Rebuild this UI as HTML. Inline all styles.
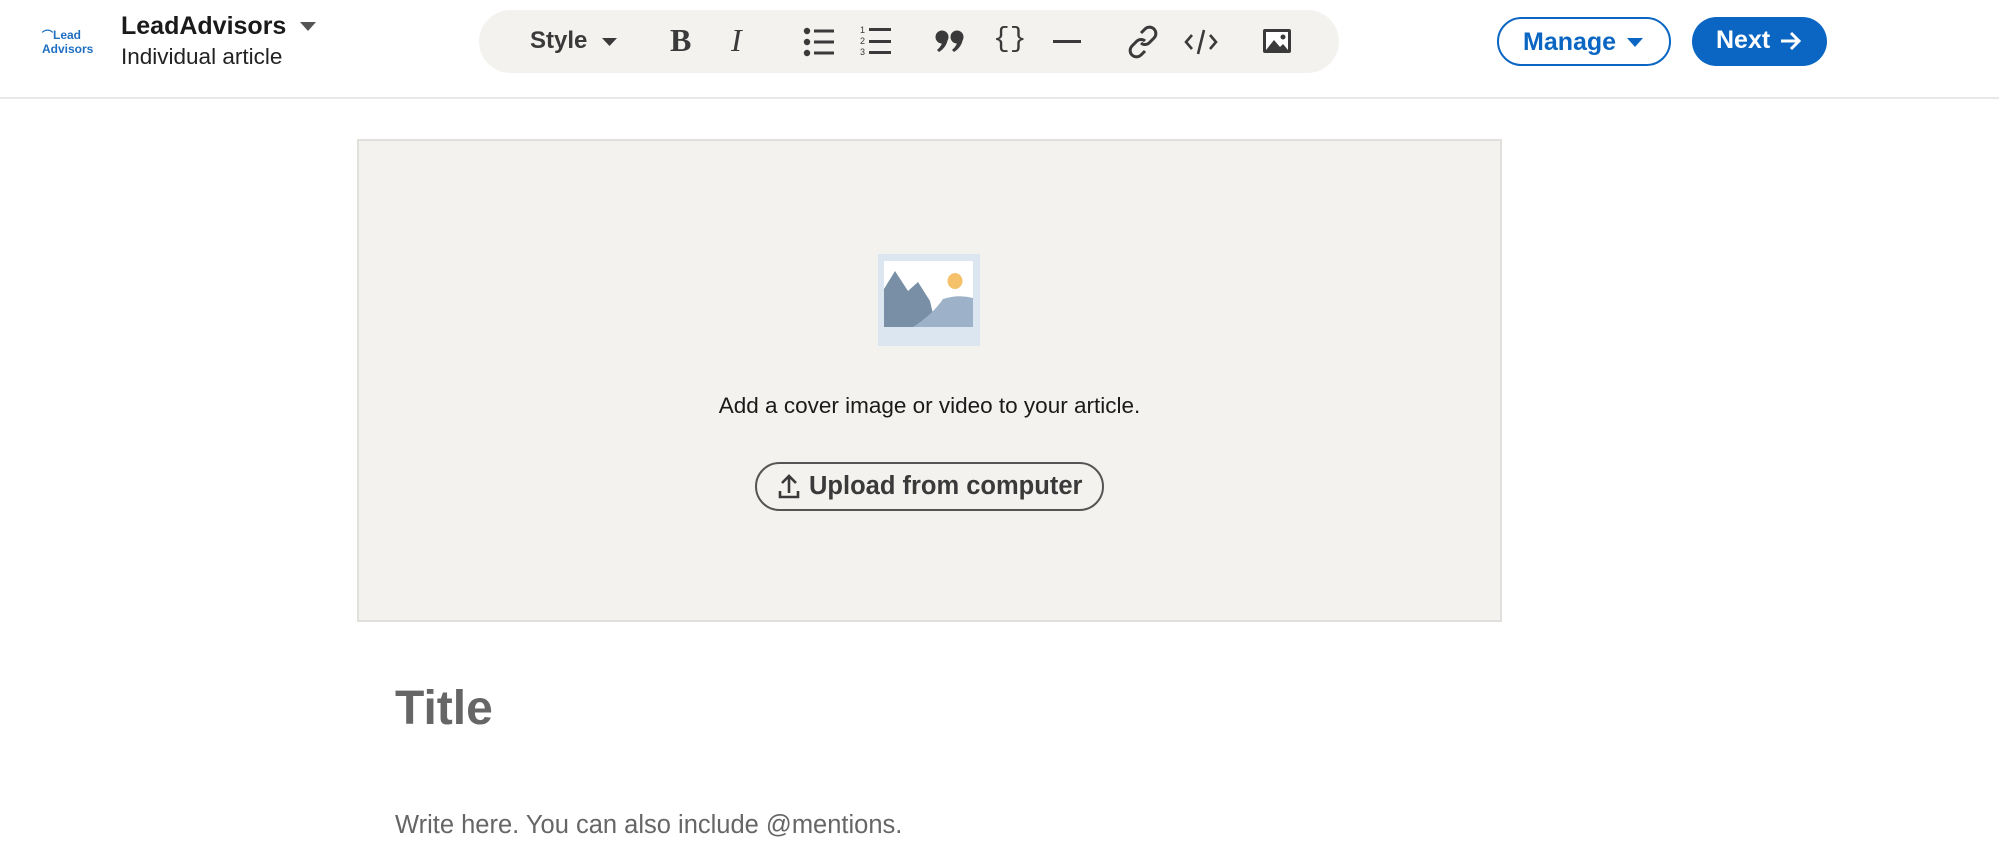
<!DOCTYPE html>
<html><head><style>
*{margin:0;padding:0;box-sizing:border-box}
body{width:1999px;height:858px;background:#fff;font-family:"Liberation Sans",sans-serif;position:relative;overflow:hidden;color:#000}
.a{position:absolute}
.hdr{left:0;top:0;width:1999px;height:99px;border-bottom:2px solid #e8e8e8}
.tb{left:479px;top:10px;width:860px;height:63px;background:#f3f2ef;border-radius:32px}
.ic{color:#3a3a3a}
</style></head><body>
<div class="a hdr"></div>
<div class="a" style="left:42px;top:29px;color:#1f6fc0;font-weight:bold;font-size:12px;line-height:13px">
<span style="font-size:11px">&#8978;</span>Lead<br>Advisors</div>
<div class="a" style="left:121px;top:12px;font-size:25px;font-weight:bold;color:#1a1a1a">LeadAdvisors</div>
<svg class="a" style="left:300px;top:22px" width="16" height="10"><path d="M0 0H16L8 9Z" fill="#555"/></svg>
<div class="a" style="left:121px;top:44px;font-size:22.5px;color:#222">Individual article</div>

<div class="a tb"></div>
<div class="a ic" style="left:530px;top:27px;font-size:24px;font-weight:bold">Style</div>
<svg class="a" style="left:602px;top:38px" width="15" height="9"><path d="M0 0H15L7.5 8Z" fill="#3a3a3a"/></svg>
<div class="a ic" style="left:670px;top:22px;font-size:32px;font-weight:bold;font-family:'Liberation Serif',serif">B</div>
<div class="a ic" style="left:731px;top:22px;font-size:32px;font-style:italic;font-family:'Liberation Serif',serif">I</div>
<svg class="a" style="left:802px;top:26px" width="34" height="32" fill="#3a3a3a"><circle cx="5" cy="5" r="3.2"/><circle cx="5" cy="16" r="3.2"/><circle cx="5" cy="27" r="3.2"/><rect x="12" y="3.5" width="20" height="3"/><rect x="12" y="14.5" width="20" height="3"/><rect x="12" y="25.5" width="20" height="3"/></svg>
<svg class="a" style="left:860px;top:24px" width="34" height="34" fill="#3a3a3a"><text x="0" y="9" font-size="9" font-family="Liberation Sans">1</text><text x="0" y="20" font-size="9" font-family="Liberation Sans">2</text><text x="0" y="31" font-size="9" font-family="Liberation Sans">3</text><rect x="9" y="4" width="22" height="3"/><rect x="9" y="16" width="22" height="3"/><rect x="9" y="27" width="22" height="3"/></svg>
<svg class="a" style="left:934px;top:30px" width="32" height="24" fill="#3a3a3a"><circle cx="8" cy="7" r="6.5"/><path d="M14 8Q13 17 5 22L3 20Q9 15 8 10Z"/><circle cx="23" cy="7" r="6.5"/><path d="M29 8Q28 17 20 22L18 20Q24 15 23 10Z"/></svg>
<div class="a ic" style="left:993px;top:24px;font-size:28px;font-family:'Liberation Mono',monospace">{}</div>
<div class="a" style="left:1053px;top:40px;width:28px;height:3px;background:#3a3a3a"></div>
<svg class="a" style="left:1126px;top:25px" width="34" height="34" fill="none" stroke="#3a3a3a" stroke-width="3"><path d="M15 8l4-4a6 6 0 0 1 9 9l-5 5a6 6 0 0 1-8 0"/><path d="M19 26l-4 4a6 6 0 0 1-9-9l5-5a6 6 0 0 1 8 0"/></svg>
<svg class="a" style="left:1184px;top:27px" width="34" height="30" fill="none" stroke="#3a3a3a" stroke-width="2.6"><path d="M8 8L2 15L8 22M26 8L32 15L26 22M20 3L14 27"/></svg>
<svg class="a" style="left:1262px;top:28px" width="30" height="26"><rect x="1" y="1" width="28" height="24" rx="2" fill="#3a3a3a"/><rect x="4" y="4" width="22" height="18" fill="#fff"/><path d="M4 22L12 12L18 19L21 16L26 22Z" fill="#3a3a3a"/><circle cx="21" cy="9" r="2.5" fill="#3a3a3a"/></svg>

<div class="a" style="left:1497px;top:17px;width:174px;height:49px;border:2px solid #0a66c2;border-radius:25px;color:#0a66c2;font-size:25px;font-weight:bold;padding:9px 0 0 24px">Manage</div>
<svg class="a" style="left:1627px;top:38px" width="16" height="10"><path d="M0 0H16L8 9Z" fill="#0a66c2"/></svg>
<div class="a" style="left:1692px;top:17px;width:135px;height:49px;background:#0a66c2;border-radius:25px;color:#fff;font-size:25px;font-weight:bold;padding:9px 0 0 24px">Next</div>
<svg class="a" style="left:1780px;top:31px" width="22" height="20" fill="none" stroke="#fff" stroke-width="3"><path d="M1 10H19M11 2L19 10L11 18"/></svg>

<div class="a" style="left:357px;top:139px;width:1145px;height:483px;background:#f3f2ef;border:2px solid #e0dfdc"></div>
<svg class="a" style="left:878px;top:254px" width="102" height="92"><rect width="102" height="92" fill="#dce6f0"/><rect x="6" y="7" width="89" height="66" fill="#fff"/><path d="M6 73V35L17 17L30 37L40 28L52 47L58 73Z" fill="#788fa5"/><path d="M35 73Q55 60 65 45Q80 40 95 44V73Z" fill="#9db2c8"/><ellipse cx="77" cy="27" rx="7.5" ry="8" fill="#f5c26b"/></svg>
<div class="a" style="left:357px;top:393px;width:1145px;text-align:center;font-size:22.5px;color:#1a1a1a">Add a cover image or video to your article.</div>
<div class="a" style="left:755px;top:462px;width:349px;height:49px;border:2px solid #555;border-radius:25px;font-size:25.5px;font-weight:bold;color:#3a3a3a;padding:8px 0 0 52px">Upload from computer</div>
<svg class="a" style="left:778px;top:474px" width="22" height="26" fill="none" stroke="#3a3a3a" stroke-width="2.6"><path d="M11 19V3M4 9L11 2L18 9M2 17V23H20V17"/></svg>

<div class="a" style="left:395px;top:681px;font-size:48px;font-weight:bold;color:#666">Title</div>
<div class="a" style="left:395px;top:811px;font-size:25.5px;color:#666">Write here. You can also include @mentions.</div>
</body></html>
